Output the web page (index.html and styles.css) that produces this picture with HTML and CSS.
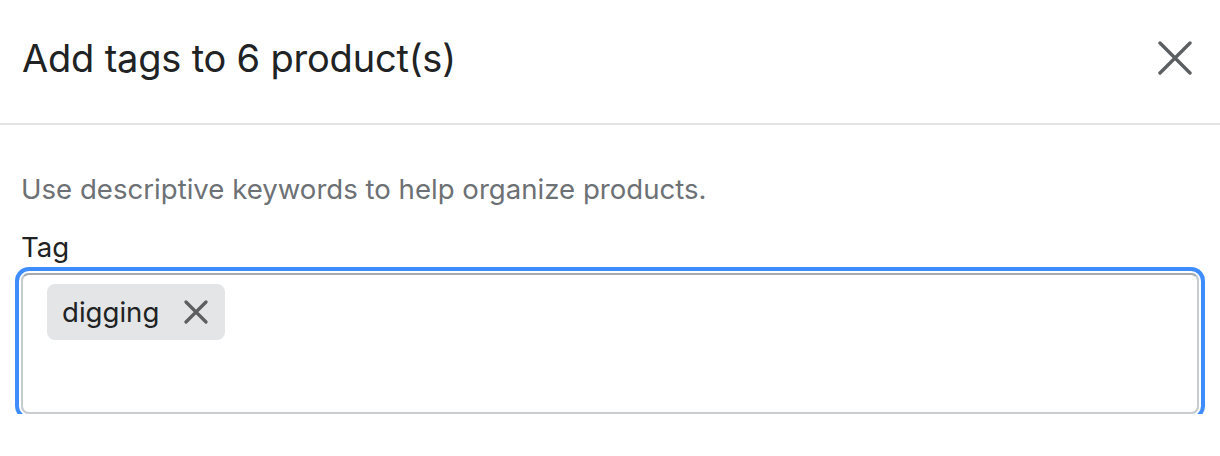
FILE: index.html
```html
<!DOCTYPE html>
<html lang="en">
<head>
<meta charset="utf-8">
<title>Add tags</title>
<link rel="stylesheet" href="styles.css">
</head>
<body>
<div class="modal">
  <header class="modal-header">
    <h2 class="title">Add tags to 6 product(s)</h2>
    <button class="close" aria-label="Close">
      <svg viewBox="0 0 34 34" width="34" height="34"><path d="M2 2L32 32M32 2L2 32" stroke="#5c5f62" stroke-width="3.4" stroke-linecap="round" fill="none"/></svg>
    </button>
  </header>
  <div class="modal-body">
    <p class="help">Use descriptive keywords to help organize products.</p>
    <label class="label">Tag</label>
    <div class="field">
      <span class="chip">digging
        <svg class="chip-x" viewBox="0 0 24 24" width="24" height="24"><path d="M2 2L22 22M22 2L2 22" stroke="#5c5f62" stroke-width="3.2" stroke-linecap="round" fill="none"/></svg>
      </span>
    </div>
  </div>
</div>
</body>
</html>
```

FILE: styles.css
```css
html, body {
  margin: 0;
  padding: 0;
  background: #ffffff;
}
body {
  font-family: Inter, "Noto Sans", "Liberation Sans", sans-serif;
  color: #202223;
}
.modal {
  width: 1220px;
}
.modal-header {
  height: 125px;
  border-bottom: 2px solid #e3e3e3;
  display: flex;
  align-items: center;
  justify-content: space-between;
  padding: 0 28px 7px 22px;
  box-sizing: border-box;
}
.title {
  margin: 0;
  font-size: 38px;
  font-weight: 400;
  line-height: 48px;
  color: #202223;
  letter-spacing: -0.2px;
}
.close {
  border: 0;
  background: none;
  padding: 0;
  width: 34px;
  height: 34px;
  display: flex;
}
.modal-body {
  padding: 44px 21px 0 21px;
}
.help {
  margin: 0;
  font-size: 27.6px;
  line-height: 40px;
  color: #6d7175;
}
.label {
  display: block;
  margin-top: 18px;
  font-size: 27.6px;
  line-height: 40px;
  color: #202223;
}
.field {
  margin-top: 6px;
  height: 141px;
  box-sizing: border-box;
  border: 2px solid #c9cccf;
  border-top-color: #a6abb0;
  border-radius: 8px;
  box-shadow: 0 0 0 2px #ffffff, 0 0 0 6px #3f8cff;
  padding: 9px 24px;
  display: flex;
  align-items: flex-start;
}
.chip {
  display: inline-flex;
  align-items: center;
  gap: 25px;
  height: 56px;
  padding: 0 17px 0 15px;
  background: #e4e5e7;
  border-radius: 8px;
  font-size: 27.6px;
  color: #202223;
}
.chip-x {
  display: block;
}
```
